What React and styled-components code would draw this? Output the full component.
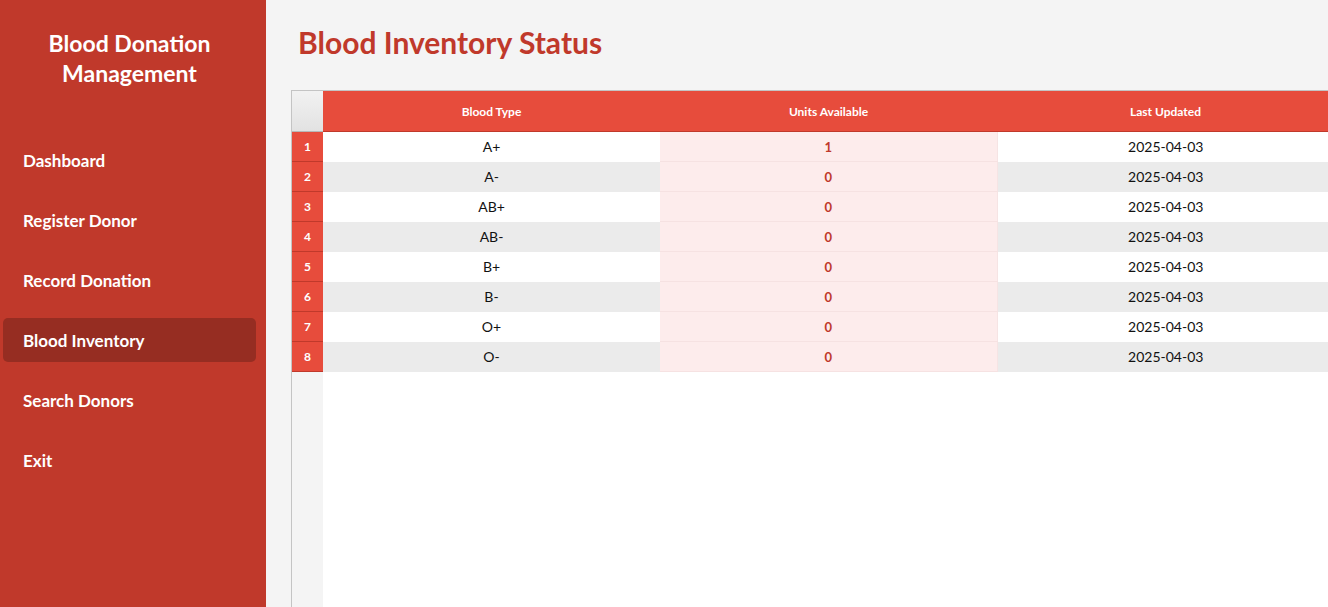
import React from "react";
import styled, { createGlobalStyle } from "styled-components";

const GlobalStyle = createGlobalStyle`
  html, body {
    margin: 0;
    padding: 0;
    height: 100%;
  }
  body {
    font-family: Lato, "Open Sans", "Liberation Sans", sans-serif;
    overflow: hidden;
  }
  #root {
    height: 100%;
  }
`;

const Layout = styled.div`
  display: flex;
  height: 100vh;
  width: 100vw;
`;

const Sidebar = styled.aside`
  width: 266px;
  flex-shrink: 0;
  background: #c0392b;
  color: #fff;
  padding-top: 28px;
  box-sizing: border-box;
`;

const Brand = styled.h1`
  margin: 0 0 50px;
  padding-right: 7px;
  font-size: 23px;
  line-height: 30px;
  font-weight: 700;
  text-align: center;
`;

const Nav = styled.nav`
  display: flex;
  flex-direction: column;
  gap: 16px;
  padding: 0 10px 0 3px;
`;

const NavItem = styled.div`
  height: 44px;
  display: flex;
  align-items: center;
  padding-left: 20px;
  border-radius: 5px;
  font-size: 17px;
  font-weight: 700;
  background: ${(p) => (p.active ? "#962d22" : "transparent")};
  cursor: pointer;
`;

const Main = styled.main`
  flex: 1;
  background: #f4f4f4;
  padding: 25px 0 0 25px;
  display: flex;
  flex-direction: column;
  overflow: hidden;
  min-width: 0;
`;

const Heading = styled.h2`
  margin: 0 0 31px 7px;
  font-size: 30px;
  line-height: 34px;
  font-weight: 700;
  color: #c0392b;
`;

const Frame = styled.div`
  flex: 1;
  border-left: 1px solid #c4c4c4;
  border-top: 1px solid #c4c4c4;
  background: linear-gradient(to right, #f4f4f4 31px, #fff 31px);
  overflow: hidden;
`;

const Table = styled.table`
  border-collapse: collapse;
  table-layout: fixed;
  width: 1042px;
`;

const Corner = styled.th`
  width: 31px;
  height: 40px;
  padding: 0;
  background: linear-gradient(#f2f2f2, #e2e2e2);
  border-bottom: 1px solid #b8b8b8;
`;

const HeadCell = styled.th`
  width: 337px;
  height: 40px;
  padding: 0;
  background: #e74c3c;
  color: #fff;
  font-size: 12px;
  font-weight: 700;
  text-align: center;
  border-bottom: 1px solid #c0392b;
`;

const Row = styled.tr`
  background: ${(p) => (p.odd ? "#ebebeb" : "#fff")};
`;

const RowNum = styled.td`
  height: 29px;
  padding: 0;
  background: #e74c3c;
  color: #fff;
  font-size: 12px;
  font-weight: 700;
  text-align: center;
  border-bottom: 1px solid #c0392b;
`;

const Cell = styled.td`
  padding: 0;
  text-align: center;
  font-size: 14px;
  color: #111;
  border-bottom: 1px solid transparent;
  ${(p) =>
    p.units &&
    `
    background: #fdecec;
    color: #c0392b;
    font-weight: 700;
    font-size: 13px;
    border-bottom: 1px solid #f6e2e2;
    border-right: 1px solid #f6e4e4;
  `}
`;

const menu = [
  "Dashboard",
  "Register Donor",
  "Record Donation",
  "Blood Inventory",
  "Search Donors",
  "Exit",
];

const inventory = [
  { type: "A+", units: 1 },
  { type: "A-", units: 0 },
  { type: "AB+", units: 0 },
  { type: "AB-", units: 0 },
  { type: "B+", units: 0 },
  { type: "B-", units: 0 },
  { type: "O+", units: 0 },
  { type: "O-", units: 0 },
];

const App = () => {
  return (
    <>
      <GlobalStyle />
      <Layout>
        <Sidebar>
          <Brand>
            Blood Donation
            <br />
            Management
          </Brand>
          <Nav>
            {menu.map((item) => (
              <NavItem key={item} active={item === "Blood Inventory"}>
                {item}
              </NavItem>
            ))}
          </Nav>
        </Sidebar>

        <Main>
          <Heading>Blood Inventory Status</Heading>
          <Frame>
            <Table>
              <thead>
                <tr>
                  <Corner />
                  <HeadCell>Blood Type</HeadCell>
                  <HeadCell>Units Available</HeadCell>
                  <HeadCell>Last Updated</HeadCell>
                </tr>
              </thead>
              <tbody>
                {inventory.map((row, i) => (
                  <Row key={row.type} odd={i % 2 === 1}>
                    <RowNum>{i + 1}</RowNum>
                    <Cell>{row.type}</Cell>
                    <Cell units>{row.units}</Cell>
                    <Cell>2025-04-03</Cell>
                  </Row>
                ))}
              </tbody>
            </Table>
          </Frame>
        </Main>
      </Layout>
    </>
  );
};

export default App;
